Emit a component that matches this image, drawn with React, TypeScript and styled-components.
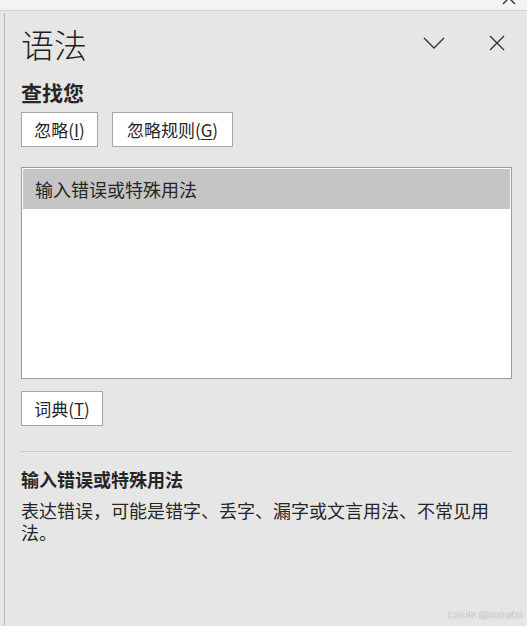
import React from "react";
import styled, { createGlobalStyle } from "styled-components";

const Global = createGlobalStyle`
  html, body { margin: 0; padding: 0; background: #e6e6e6; }
  body {
    font-family: "Noto Sans CJK SC", "Microsoft YaHei", sans-serif;
    color: #262626;
    overflow: hidden;
  }
`;

const Page = styled.div`
  position: relative;
  width: 527px;
  height: 626px;
  display: flex;
  flex-direction: column;
  background: #e6e6e6;
  overflow: hidden;
`;

const TopStrip = styled.div`
  height: 10px;
  flex: none;
  background: #f3f3f3;
  border-bottom: 1px solid #d2d2d2;
  display: flex;
  justify-content: flex-end;
  align-items: flex-end;
  padding-right: 11px;
  overflow: hidden;
`;

const StripIcon = styled.svg`
  display: block;
  margin-bottom: 5px;
`;

const Pane = styled.div`
  flex: 1;
  margin: 2px 0 0 4px;
  border-left: 1px solid #b8b8b8;
  padding: 15px 15px 0 16px;
  display: flex;
  flex-direction: column;
`;

const TitleRow = styled.div`
  display: flex;
  align-items: center;
  justify-content: space-between;
  padding-right: 7px;
`;

const Title = styled.h1`
  margin: 0;
  font-size: 33px;
  line-height: 33px;
  font-weight: 300;
  color: #1f1f1f;
`;

const TitleActions = styled.div`
  display: flex;
  align-items: center;
  gap: 44px;
  margin-top: -3px;
`;

const IconButton = styled.button`
  border: none;
  background: transparent;
  padding: 0;
  margin: 0;
  display: flex;
  align-items: center;
  justify-content: center;
  cursor: pointer;
`;

const Heading = styled.h2`
  margin: 21px 0 0;
  font-size: 21px;
  line-height: 21px;
  font-weight: 700;
  color: #262626;
`;

const ButtonRow = styled.div`
  display: flex;
  gap: 14px;
  margin-top: 9px;
`;

const Btn = styled.button<{ $w: number }>`
  width: ${(p) => p.$w}px;
  height: 35px;
  box-sizing: border-box;
  background: #ffffff;
  border: 1px solid #a6a6a6;
  border-radius: 0;
  padding: 0;
  font-family: inherit;
  font-size: 17px;
  line-height: 1;
  color: #262626;
  display: flex;
  align-items: center;
  justify-content: center;
`;

const Key = styled.u`
  text-decoration: underline;
  text-underline-offset: 2px;
`;

const ListBox = styled.div`
  margin-top: 20px;
  height: 212px;
  box-sizing: border-box;
  border: 1px solid #9c9c9c;
  background: #ffffff;
  padding: 1px;
`;

const ListRow = styled.div<{ $selected?: boolean }>`
  height: 40px;
  display: flex;
  align-items: center;
  padding-left: 12px;
  background: ${(p) => (p.$selected ? "#c5c5c5" : "transparent")};
  font-size: 18px;
  color: #262626;
`;

const SingleRow = styled.div`
  margin-top: 12px;
  display: flex;
`;

const Separator = styled.hr`
  margin: 25px 0 0;
  border: none;
  border-top: 1px solid #c8c8c8;
  height: 0;
`;

const DetailTitle = styled.h3`
  margin: 16px 0 0;
  font-size: 18px;
  line-height: 23px;
  font-weight: 700;
  color: #262626;
`;

const DetailText = styled.p`
  margin: 8px 0 0;
  max-width: 482px;
  font-size: 18px;
  line-height: 22px;
  color: #262626;
`;

const Watermark = styled.div`
  position: absolute;
  right: 4px;
  bottom: 6px;
  font-family: "Liberation Sans", Arial, sans-serif;
  font-size: 9.5px;
  line-height: 11px;
  color: #ffffff;
  text-shadow: 0 0 1px #8c8c8c, 0 0 1px #8c8c8c;
  letter-spacing: 0.3px;
`;

const CloseIcon = ({ size = 16 }: { size?: number }) => (
  <svg width={size} height={size} viewBox="0 0 16 16">
    <path d="M1 1 L15 15 M15 1 L1 15" stroke="#333" strokeWidth="1.4" fill="none" />
  </svg>
);

const ChevronIcon = () => (
  <svg width="22" height="12" viewBox="0 0 22 12">
    <path d="M1 1 L11 11 L21 1" stroke="#333" strokeWidth="1.4" fill="none" />
  </svg>
);

export default function App() {
  return (
    <>
      <Global />
      <Page>
        <TopStrip>
          <StripIcon width="14" height="14" viewBox="0 0 14 14">
            <path d="M1 1 L13 13 M13 1 L1 13" stroke="#333" strokeWidth="1.4" fill="none" />
          </StripIcon>
        </TopStrip>
        <Pane>
          <TitleRow>
            <Title>语法</Title>
            <TitleActions>
              <IconButton aria-label="折叠">
                <ChevronIcon />
              </IconButton>
              <IconButton aria-label="关闭">
                <CloseIcon />
              </IconButton>
            </TitleActions>
          </TitleRow>
          <Heading>查找您</Heading>
          <ButtonRow>
            <Btn $w={77}>
              忽略(<Key>I</Key>)
            </Btn>
            <Btn $w={121}>
              忽略规则(<Key>G</Key>)
            </Btn>
          </ButtonRow>
          <ListBox>
            <ListRow $selected>输入错误或特殊用法</ListRow>
          </ListBox>
          <SingleRow>
            <Btn $w={82}>
              词典(<Key>T</Key>)
            </Btn>
          </SingleRow>
          <Separator />
          <DetailTitle>输入错误或特殊用法</DetailTitle>
          <DetailText>
            表达错误，可能是错字、丢字、漏字或文言用法、不常见用法。
          </DetailText>
        </Pane>
        <Watermark>CSDN @So1ok5</Watermark>
      </Page>
    </>
  );
}
